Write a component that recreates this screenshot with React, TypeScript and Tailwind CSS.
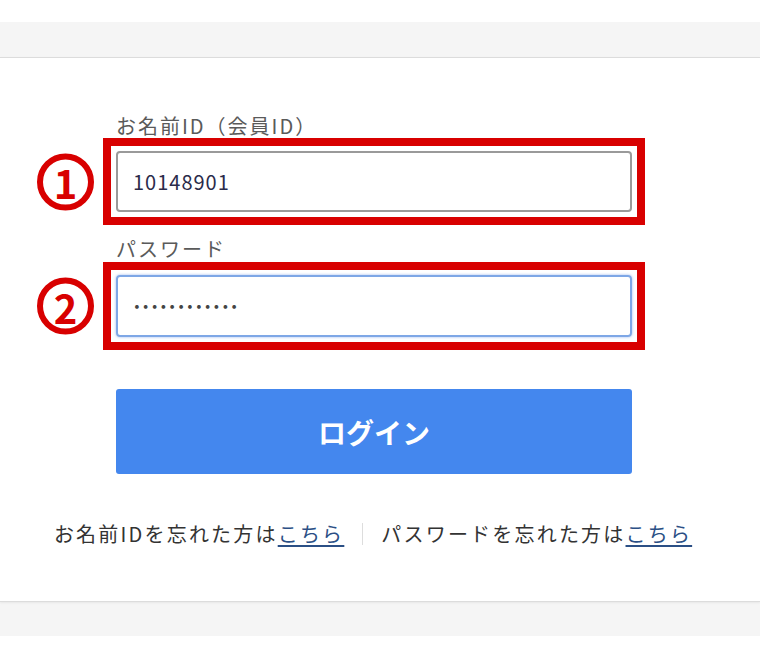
import React from "react";

const font = { fontFamily: '"Noto Sans CJK JP", "Noto Sans", sans-serif' };

function Circled({ n }: { n: string }) {
  return (
    <div className="absolute left-[-74px] top-1/2 -translate-y-1/2 w-[57px] h-[57px] rounded-full border-[6px] border-[#d80000] flex items-center justify-center">
      <span className="text-[40px] font-bold leading-none text-[#d80000]" style={{ fontFamily: '"Noto Sans CJK JP", sans-serif' }}>
        {n}
      </span>
    </div>
  );
}

export default function App() {
  return (
    <div className="w-[760px] h-[655px] bg-white overflow-hidden" style={font}>
      <div className="h-[22px] bg-white" />
      <div className="bg-[#f5f5f5] pt-[35px] pb-[34px]">
        <div className="bg-white border-t border-b border-[#dcdcdc] shadow-[0_1px_2px_rgba(0,0,0,0.06)] pt-[53px] pb-[52px]">
          <div className="w-[516px] ml-[116px] flex flex-col">
            <div className="text-[20px] leading-[30px] tracking-[2px] text-[#5a5a5a]">お名前ID（会員ID）</div>
            <div className="relative mt-[-3px] mx-[-13px] border-[8px] border-[#d80000] p-[5px]">
              <Circled n="1" />
              <div className="h-[61px] rounded-[4px] border-2 border-[#9a9a9a] flex items-center pl-[15px] text-[20px] tracking-[1px] text-[#2b2b4a]">
                10148901
              </div>
            </div>
            <div className="text-[20px] leading-[30px] tracking-[2px] text-[#5a5a5a] mt-[9px]">パスワード</div>
            <div className="relative mt-[-2px] mx-[-13px] border-[8px] border-[#d80000] p-[5px]">
              <Circled n="2" />
              <div className="h-[62px] rounded-[4px] border-2 border-[#7ea7e6] shadow-[0_0_3px_rgba(90,140,230,0.6)] flex items-center pl-[13px] text-[20px] font-bold text-[#444] tracking-[-3px]">
                ············
              </div>
            </div>
            <button className="mt-[39px] h-[85px] rounded-[3px] bg-[#4487ee] text-white text-[28px] font-semibold flex items-center justify-center">
              ログイン
            </button>
          </div>
          <div className="mt-[45px] flex items-center justify-center text-[20px] leading-[30px] tracking-[2.2px] text-[#333] pr-[14px]">
            <span>
              お名前IDを忘れた方は<span className="text-[#2b4f85] underline underline-offset-[3px]">こちら</span>
            </span>
            <span className="mx-[18px] w-px h-[22px] bg-[#dddddd]" />
            <span>
              パスワードを忘れた方は<span className="text-[#2b4f85] underline underline-offset-[3px]">こちら</span>
            </span>
          </div>
        </div>
      </div>
    </div>
  );
}
